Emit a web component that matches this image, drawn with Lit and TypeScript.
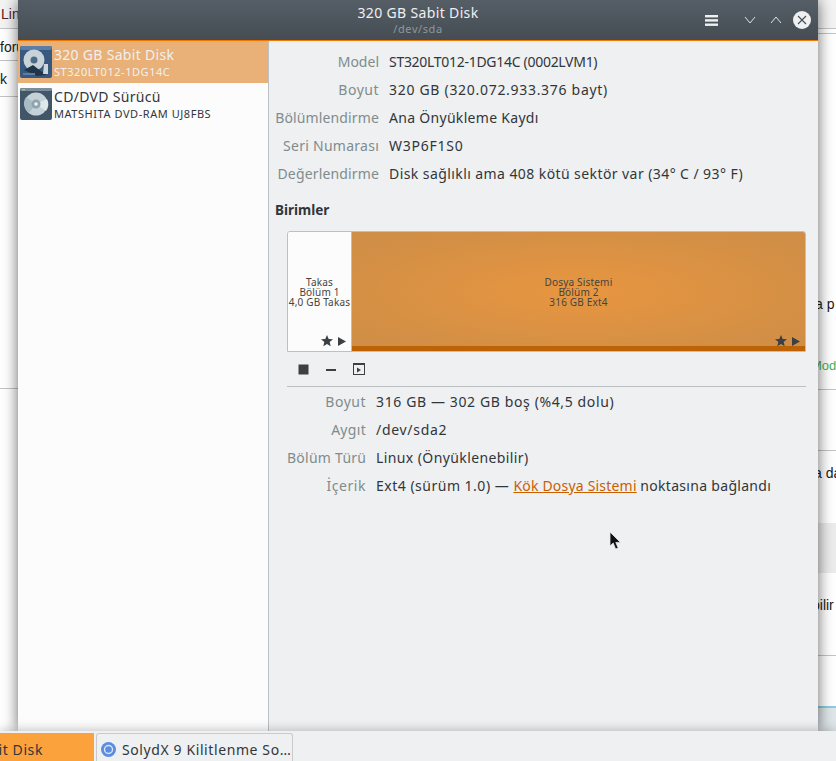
import {LitElement, html, css, svg} from 'lit';
import {customElement} from 'lit/decorators.js';

const star = svg`<path d="M6 0l1.700 3.900 4.300.4-3.300 2.800 1 4.200L6 9 2.300 11.300l1-4.200L0 4.300l4.300-.4z" fill="#3b4045"/>`;
const play = svg`<path d="M0 0l8 4.500-8 4.500z" fill="#3b4045"/>`;

// label / value with the tracking each one needs to reach the reference width
const driveInfo = [
  {label: 'Model', ls: 0, value: 'ST320LT012-1DG14C (0002LVM1)', vs: -0.29},
  {label: 'Boyut', ls: 0.5, value: '320 GB (320.072.933.376 bayt)', vs: 0.7},
  {label: 'Bölümlendirme', ls: 0.13, value: 'Ana Önyükleme Kaydı', vs: 0.3},
  {label: 'Seri Numarası', ls: 0.26, value: 'W3P6F1S0', vs: 0.75},
  {label: 'Değerlendirme', ls: 0.15, value: 'Disk sağlıklı ama 408 kötü sektör var (34° C / 93° F)', vs: 0.42},
];

const partInfo = [
  {label: 'Boyut', ls: 0.5, value: '316 GB — 302 GB boş (%4,5 dolu)', vs: 0.62},
  {label: 'Aygıt', ls: 0.3, value: '/dev/sda2', vs: 0.7},
  {label: 'Bölüm Türü', ls: 0.25, value: 'Linux (Önyüklenebilir)', vs: 0.4},
];

const spacing = (v: number) => `letter-spacing:${v}px`;

@customElement('app-root')
export class AppRoot extends LitElement {
  static styles = css`
    :host {
      display: block;
      position: relative;
      width: 836px;
      height: 761px;
      overflow: hidden;
      background: #fff;
      font-family: 'Noto Sans', sans-serif;
      font-size: 14px;
      color: #31363b;
    }

    /* browser page behind the window */
    .page-head {
      position: absolute;
      left: 0;
      right: 0;
      top: 0;
      height: 28px;
      background: #f4f4f4;
      border-bottom: 1px solid #c4c4c4;
    }
    .behind {
      position: absolute;
      color: #1a1a1a;
      font-family: 'Liberation Sans', sans-serif;
      font-size: 14px;
      line-height: 18px;
      white-space: nowrap;
    }
    .lin {
      left: 1px;
      top: 5px;
      color: #5c2020;
    }
    .foru {
      left: 0;
      top: 38px;
    }
    .k {
      left: 0;
      top: 70px;
    }
    .ap {
      left: 815px;
      top: 295px;
    }
    .mod {
      left: 811px;
      top: 357px;
      color: #4caf50;
      font-size: 13px;
    }
    .ada {
      left: 814px;
      top: 464px;
    }
    .bilir {
      left: 812px;
      top: 596px;
    }
    .line {
      position: absolute;
      height: 1px;
      background: #c4c4c4;
    }
    .line.l {
      left: 0;
      width: 18px;
    }
    .line.r {
      left: 818px;
      width: 18px;
    }
    .band {
      position: absolute;
      left: 818px;
      top: 523px;
      width: 18px;
      height: 50px;
      background: #ececec;
    }
    .foot {
      position: absolute;
      left: 818px;
      top: 706px;
      width: 18px;
      height: 25px;
      background: #dfe6e9;
      border-top: 2px solid #8ecae0;
      box-sizing: border-box;
    }

    .window {
      position: absolute;
      left: 18px;
      top: 0;
      width: 800px;
      height: 731px;
      display: flex;
      flex-direction: column;
      background: #eff0f1;
      box-shadow: 0 0 14px rgba(0, 0, 0, 0.6);
    }
    .titlebar {
      height: 40px;
      flex: none;
      position: relative;
      display: flex;
      flex-direction: column;
      align-items: center;
      background: linear-gradient(#555e66, #454d53);
      border-bottom: 1px solid #f67400;
      color: #eff0f1;
    }
    .title {
      line-height: 18px;
      margin-top: 4px;
      letter-spacing: 0.35px;
    }
    .subtitle {
      font-size: 11px;
      line-height: 14px;
      letter-spacing: 0.6px;
      color: #8f979d;
    }
    .controls {
      position: absolute;
      right: 7px;
      top: 11px;
      display: flex;
      align-items: center;
    }
    .controls svg {
      display: block;
    }
    .menu {
      margin-right: 26px;
    }
    .ctl {
      margin-right: 14px;
    }
    .close {
      width: 18px;
      height: 18px;
      margin-left: -3px;
      border-radius: 50%;
      background: #eff0f1;
      display: flex;
      align-items: center;
      justify-content: center;
    }

    .body {
      flex: 1;
      display: flex;
      min-height: 0;
    }
    .sidebar {
      width: 250px;
      flex: none;
      background: #fcfcfc;
      border-right: 1px solid #bdc0c2;
    }
    .drive {
      height: 42px;
      display: flex;
      align-items: center;
      gap: 2px;
      padding-left: 2px;
    }
    .drive.selected {
      background: #e9b077;
      color: #eff0f1;
    }
    .drive svg {
      flex: none;
    }
    .drive-name {
      line-height: 18px;
      letter-spacing: 0.3px;
    }
    .drive-model {
      font-size: 11px;
      line-height: 14px;
      margin-top: 1px;
      letter-spacing: 0.55px;
    }

    .main {
      flex: 1;
      padding: 6px 12px 0 6px;
    }
    .info {
      display: grid;
      grid-template-columns: 104px 1fr;
      column-gap: 10px;
      grid-auto-rows: 28px;
      align-items: center;
      white-space: nowrap;
    }
    .info.sub {
      grid-template-columns: 79px 1fr;
      margin-left: 12px;
    }
    .label {
      text-align: right;
      color: #7f8c8d;
    }
    .content {
      letter-spacing: 0.5px;
    }
    a {
      color: #c95f00;
      text-decoration: underline;
      letter-spacing: 0.2px;
    }
    .tail {
      letter-spacing: 0.3px;
    }
    h3 {
      margin: 14px 0 12px;
      font-size: 13.500px;
      line-height: 18px;
      font-weight: 700;
    }
    .volumes {
      margin-left: 12px;
    }
    .bar {
      height: 119px;
      display: flex;
      border: 1px solid #bdc0c2;
      border-radius: 3px 3px 0 0;
      overflow: hidden;
      font-size: 10px;
      line-height: 10px;
      letter-spacing: 0.18px;
      text-align: center;
      color: #45443f;
    }
    .part {
      position: relative;
      display: flex;
      align-items: center;
      justify-content: center;
      box-sizing: border-box;
      white-space: nowrap;
    }
    .swap {
      width: 64px;
      flex: none;
      background: #fcfcfc;
      border-right: 1px solid #bdc0c2;
    }
    .ext {
      flex: 1;
      background: radial-gradient(ellipse at center, #e89640 0%, #d38f45 75%, #cf8d47 100%);
    }
    .used {
      position: absolute;
      left: 0;
      right: 0;
      bottom: 0;
      height: 5px;
      background: #bd6205;
    }
    .marks {
      position: absolute;
      right: 5px;
      bottom: 4px;
      display: flex;
      align-items: center;
      gap: 5px;
    }
    .marks svg {
      display: block;
    }
    .toolbar {
      height: 34px;
      display: flex;
      align-items: center;
      gap: 17px;
      padding-left: 11px;
      border-bottom: 1px solid #bdc0c2;
    }

    .cursor {
      position: absolute;
      left: 609px;
      top: 531px;
    }

    .taskbar {
      position: absolute;
      left: 0;
      right: 0;
      bottom: 0;
      height: 30px;
      display: flex;
      background: #eff0f1;
      box-shadow: 0 0 12px rgba(0, 0, 0, 0.28);
      box-sizing: border-box;
    }
    .task {
      margin-top: 2px;
      padding-top: 4px;
      display: flex;
      align-items: center;
      box-sizing: border-box;
      white-space: nowrap;
      overflow: hidden;
      letter-spacing: 0.6px;
    }
    .task.active {
      width: 94px;
      flex: none;
      background: #fba23c;
      justify-content: flex-end;
      padding-right: 51px;
    }
    .task.active span {
      flex: none;
    }
    .task.other {
      width: 197px;
      margin-left: 2px;
      padding-left: 4px;
      gap: 6px;
      border: 1px solid #c8cacc;
      border-bottom: 0;
      border-radius: 3px 3px 0 0;
    }
  `;

  render() {
    return html`
      <div class="page-head"></div>
      <div class="behind lin">Lin</div>
      <div class="behind foru">foru</div>
      <div class="behind k">k</div>
      <div class="behind ap">a p</div>
      <div class="behind mod">Mod</div>
      <div class="behind ada">a da</div>
      <div class="behind bilir">bilir</div>
      <div class="line l" style="top:60px"></div>
      <div class="line l" style="top:96px"></div>
      <div class="line l" style="top:388px"></div>
      <div class="line r" style="top:33px"></div>
      <div class="line r" style="top:389px"></div>
      <div class="line r" style="top:450px"></div>
      <div class="line r" style="top:655px"></div>
      <div class="band"></div>
      <div class="foot"></div>

      <div class="window">
        <div class="titlebar">
          <div class="title">320 GB Sabit Disk</div>
          <div class="subtitle">/dev/sda</div>
          <div class="controls">
            <svg class="menu" width="13" height="11" viewBox="0 0 13 11" fill="#eff0f1">
              <rect width="13" height="2.400"/><rect y="4.200" width="13" height="2.400"/><rect y="8.500" width="13" height="2.400"/>
            </svg>
            <svg class="ctl" width="12" height="8" viewBox="0 0 12 8" fill="none" stroke="#dfe2e4" stroke-width="1">
              <path d="M1 1l5 6 5-6"/>
            </svg>
            <svg class="ctl" width="12" height="8" viewBox="0 0 12 8" fill="none" stroke="#dfe2e4" stroke-width="1">
              <path d="M1 7l5-6 5 6"/>
            </svg>
            <div class="close">
              <svg width="10" height="10" viewBox="0 0 10 10" stroke="#454d53" stroke-width="1.100"><path d="M1 1l8 8M9 1l-8 8"/></svg>
            </div>
          </div>
        </div>
        <div class="body">
          <div class="sidebar">
            <div class="drive selected">
              ${this.hddIcon()}
              <div>
                <div class="drive-name">320 GB Sabit Disk</div>
                <div class="drive-model">ST320LT012-1DG14C</div>
              </div>
            </div>
            <div class="drive">
              ${this.cdIcon()}
              <div>
                <div class="drive-name">CD/DVD Sürücü</div>
                <div class="drive-model">MATSHITA DVD-RAM UJ8FBS</div>
              </div>
            </div>
          </div>
          <div class="main">
            <div class="info">${driveInfo.map((r) => this.row(r))}</div>
            <h3>Birimler</h3>
            <div class="volumes">
              <div class="bar">
                <div class="part swap">
                  <div>Takas<br />Bölüm 1<br />4,0 GB Takas</div>
                  ${this.marks()}
                </div>
                <div class="part ext">
                  <div>Dosya Sistemi<br />Bölüm 2<br />316 GB Ext4</div>
                  <div class="used"></div>
                  ${this.marks()}
                </div>
              </div>
              <div class="toolbar">
                <svg width="11" height="11"><rect x="0.5" y="0.5" width="10" height="10" fill="#3b4045"/></svg>
                <svg width="10" height="11"><rect y="5" width="10" height="2" fill="#3b4045"/></svg>
                <svg width="12" height="12" viewBox="0 0 12 12">
                  <rect x="0.5" y="0.5" width="11" height="11" fill="none" stroke="#3b4045"/>
                  <rect width="12" height="2" fill="#3b4045"/>
                  <path d="M4 4.500l4 2.500-4 2.500z" fill="#3b4045"/>
                </svg>
              </div>
            </div>
            <div class="info sub">
              ${partInfo.map((r) => this.row(r))}
              <div class="label" style=${spacing(0.55)}>İçerik</div>
              <div><span class="content">Ext4 (sürüm 1.0) — </span><a>Kök Dosya Sistemi</a> <span class="tail">noktasına bağlandı</span></div>
            </div>
          </div>
        </div>
      </div>

      <svg class="cursor" width="14" height="21" viewBox="0 0 14 21">
        <path d="M1 1v14l3.200-3 2.400 6 2.600-1-2.400-5.600h4.600z" fill="#111" stroke="#e8e8e8" stroke-width="0.8"/>
      </svg>

      <div class="taskbar">
        <div class="task active"><span>Sabit Disk</span></div>
        <div class="task other">
          <svg width="15" height="15" viewBox="0 0 15 15">
            <circle cx="7.500" cy="7.500" r="7.500" fill="#5b8de0"/>
            <circle cx="7.500" cy="7.500" r="4" fill="none" stroke="#dbe6f8" stroke-width="1.400"/>
          </svg>
          <span>SolydX 9 Kilitlenme So…</span>
        </div>
      </div>
    `;
  }

  row(r: {label: string; ls: number; value: string; vs: number}) {
    return html`<div class="label" style=${spacing(r.ls)}>${r.label}</div>
      <div style=${spacing(r.vs)}>${r.value}</div>`;
  }

  marks() {
    return html`<div class="marks">
      <svg width="12" height="12" viewBox="0 0 12 12">${star}</svg>
      <svg width="8" height="9" viewBox="0 0 8 9">${play}</svg>
    </div>`;
  }

  hddIcon() {
    return html`<svg width="32" height="32" viewBox="0 0 32 32">
      <rect width="32" height="32" rx="2" fill="#37597f"/>
      <rect width="32" height="4" rx="2" fill="#5c7ea5"/>
      <circle cx="14" cy="14" r="10.500" fill="#c8d2d9"/>
      <circle cx="14" cy="14" r="3.500" fill="#4f6a86"/>
      <path d="M4 24l9-5 9 7 4-1 0 4-9 1z" fill="#22344a"/>
      <path d="M24 18h4v10h-5z" fill="#cdd6dc"/>
      <path d="M3 27h12v2H3z" fill="#5c7ea5"/>
    </svg>`;
  }

  cdIcon() {
    return html`<svg width="32" height="32" viewBox="0 0 32 32">
      <rect width="32" height="32" rx="2" fill="#42566a"/>
      <rect width="32" height="3" rx="1.500" fill="#7c8c9c"/>
      <rect x="2" y="1" width="3" height="1.500" fill="#9bc46a"/>
      <circle cx="16" cy="16" r="11.500" fill="#c4d2d8"/>
      <path d="M16 16L6 9a11.500 11.500 0 0 0 3 16z" fill="#a8bcc5"/>
      <path d="M16 16L26 23a11.500 11.500 0 0 0 1-12z" fill="#dfe7ea"/>
      <circle cx="16" cy="16" r="4.500" fill="#8fa3ae"/>
      <circle cx="16" cy="16" r="1.800" fill="#eef1f3"/>
    </svg>`;
  }
}
